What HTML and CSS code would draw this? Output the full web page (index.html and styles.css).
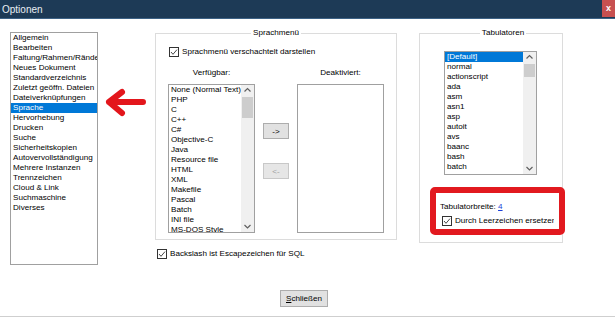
FILE: index.html
```html
<!DOCTYPE html>
<html lang="de">
<head>
  <meta charset="UTF-8" />
  <title>Optionen</title>
  <link rel="stylesheet" href="styles.css">
</head>
<body>
  <div class="titlebar">
    <span class="title">Optionen</span>
    <span class="close">x</span>
  </div>

  <div class="content">
    <ul class="list nav">
      <li>Allgemein</li>
      <li>Bearbeiten</li>
      <li>Faltung/Rahmen/Ränder</li>
      <li>Neues Dokument</li>
      <li>Standardverzeichnis</li>
      <li>Zuletzt geöffn. Dateien</li>
      <li>Dateiverknüpfungen</li>
      <li class="selected">Sprache</li>
      <li>Hervorhebung</li>
      <li>Drucken</li>
      <li>Suche</li>
      <li>Sicherheitskopien</li>
      <li>Autovervollständigung</li>
      <li>Mehrere Instanzen</li>
      <li>Trennzeichen</li>
      <li>Cloud &amp; Link</li>
      <li>Suchmaschine</li>
      <li>Diverses</li>
    </ul>

    <div class="arrow-col">
      <svg class="arrow" width="44" height="30" viewBox="0 0 44 30">
        <path d="M17 4 L4 14 L17 25 M4 14 L38 14" fill="none" stroke="#e3161c" stroke-width="6" stroke-linecap="round" stroke-linejoin="round"/>
      </svg>
    </div>

    <div class="middle">
      <fieldset class="group lang">
        <legend>Sprachmenü</legend>
        <label class="check nested">
          <svg class="cb" width="10" height="10" viewBox="0 0 10 10"><rect x="0.5" y="0.5" width="9" height="9" fill="#fff" stroke="#333"/><polyline points="2,5 4,7.3 8,2.6" fill="none" stroke="#333" stroke-width="0.9"/></svg>
          Sprachmenü verschachtelt darstellen
        </label>
        <div class="pickers">
          <div class="pick-col">
            <div class="pick-label">Verfügbar:</div>
            <div class="list scroll lang-list">
              <ul class="items">
                <li>None (Normal Text)</li>
                <li>PHP</li>
                <li>C</li>
                <li>C++</li>
                <li>C#</li>
                <li>Objective-C</li>
                <li>Java</li>
                <li>Resource file</li>
                <li>HTML</li>
                <li>XML</li>
                <li>Makefile</li>
                <li>Pascal</li>
                <li>Batch</li>
                <li>INI file</li>
                <li>MS-DOS Style</li>
              </ul>
              <div class="scrollbar">
                <svg class="chev" width="13" height="11" viewBox="0 0 13 11"><polyline points="3.5,6.5 6.5,3.5 9.5,6.5" fill="none" stroke="#606060" stroke-width="1.2"/></svg>
                <div class="track"><div class="thumb"></div></div>
                <svg class="chev" width="13" height="11" viewBox="0 0 13 11"><polyline points="3.5,4 6.5,7 9.5,4" fill="none" stroke="#606060" stroke-width="1.2"/></svg>
              </div>
            </div>
          </div>
          <div class="move-col">
            <button class="btn small">-&gt;</button>
            <button class="btn small" disabled>&lt;-</button>
          </div>
          <div class="pick-col">
            <div class="pick-label">Deaktiviert:</div>
            <div class="list lang-list"></div>
          </div>
        </div>
      </fieldset>
      <label class="check sql">
        <svg class="cb" width="10" height="10" viewBox="0 0 10 10"><rect x="0.5" y="0.5" width="9" height="9" fill="#fff" stroke="#333"/><polyline points="2,5 4,7.3 8,2.6" fill="none" stroke="#333" stroke-width="0.9"/></svg>
        Backslash ist Escapezeichen für SQL
      </label>
    </div>

    <fieldset class="group tabs">
      <legend>Tabulatoren</legend>
      <div class="list scroll tab-list">
        <ul class="items">
          <li class="selected">[Default]</li>
          <li>normal</li>
          <li>actionscript</li>
          <li>ada</li>
          <li>asm</li>
          <li>asn1</li>
          <li>asp</li>
          <li>autoit</li>
          <li>avs</li>
          <li>baanc</li>
          <li>bash</li>
          <li>batch</li>
          <li>blitzbasic</li>
        </ul>
        <div class="scrollbar">
          <svg class="chev" width="13" height="11" viewBox="0 0 13 11"><polyline points="3.5,6.5 6.5,3.5 9.5,6.5" fill="none" stroke="#606060" stroke-width="1.2"/></svg>
          <div class="track"><div class="thumb"></div></div>
          <svg class="chev" width="13" height="11" viewBox="0 0 13 11"><polyline points="3.5,4 6.5,7 9.5,4" fill="none" stroke="#606060" stroke-width="1.2"/></svg>
        </div>
      </div>
      <div class="highlight">
        <div class="tabwidth">Tabulatorbreite: <a href="#">4</a></div>
        <label class="check spaces">
          <svg class="cb" width="10" height="10" viewBox="0 0 10 10"><rect x="0.5" y="0.5" width="9" height="9" fill="#fff" stroke="#333"/><polyline points="2,5 4,7.3 8,2.6" fill="none" stroke="#333" stroke-width="0.9"/></svg>
          <span class="clip">Durch Leerzeichen ersetzen</span>
        </label>
      </div>
    </fieldset>
  </div>

  <div class="footer">
    <button class="btn close-btn"><u>S</u>chließen</button>
  </div>
</body>
</html>
```

FILE: styles.css
```css
* {
  box-sizing: border-box;
}
body {
  margin: 0;
  width: 615px;
  height: 317px;
  overflow: hidden;
  background: #fff;
  font-family: "Liberation Sans", Arial, sans-serif;
  font-size: 8.1px;
  color: #000;
}
ul {
  list-style: none;
  margin: 0;
  padding: 0;
}
li {
  height: 10px;
  line-height: 10px;
  white-space: nowrap;
  padding-left: 2px;
}
li.selected {
  background: #0078d7;
  color: #fff;
}

/* title bar */
.titlebar {
  height: 19px;
  background: #1d3a56;
  border-bottom: 1px solid #3d6286;
  display: flex;
  align-items: center;
  justify-content: space-between;
}
.title {
  color: #e8eef4;
  font-size: 10px;
  padding-left: 2px;
}
.close {
  align-self: flex-start;
  width: 13px;
  height: 17px;
  background: #c75050;
  color: #fff;
  font-size: 9px;
  font-weight: bold;
  text-align: center;
  line-height: 16px;
}

/* main area */
.content {
  height: 271px;
  display: flex;
  align-items: flex-start;
  padding: 9px 0 0 10px;
}
.list {
  border: 1px solid #a0a0a0;
  background: #fff;
  overflow: hidden;
}
.nav {
  width: 88px;
  height: 233px;
  margin-top: 4px;
}
.arrow-col {
  width: 57px;
  padding: 60px 0 0 7px;
}
.arrow {
  display: block;
}

.group {
  margin: 0;
  padding: 0;
  border: 1px solid #dcdcdc;
  min-width: 0;
}
.group legend {
  margin: 0 auto;
  padding: 0 2px;
  line-height: 10px;
  height: 10px;
}

/* Sprachmenü */
.lang {
  width: 242px;
  padding: 0 12px 6px 12px;
}
.check {
  display: flex;
  align-items: center;
  gap: 3px;
  height: 10px;
  line-height: 10px;
}
.cb {
  display: block;
  flex: none;
}
.nested {
  margin: 9px 0 0 1px;
}
.pickers {
  display: flex;
  gap: 8px;
  margin-top: 11px;
}
.pick-col {
  width: 87px;
  display: flex;
  flex-direction: column;
  align-items: center;
}
.pick-label {
  height: 10px;
  line-height: 10px;
  margin-bottom: 6px;
}
.lang-list {
  width: 87px;
  height: 149px;
}
.move-col {
  display: flex;
  flex-direction: column;
  gap: 24px;
  padding-top: 55px;
}
.btn {
  font-family: inherit;
  font-size: 8.1px;
  color: #000;
  background: #e1e1e1;
  border: 1px solid #adadad;
  padding: 0;
}
.btn.small {
  width: 26px;
  height: 16px;
}
.btn:disabled {
  color: #a0a0a0;
  background: #e6e6e6;
  border-color: #c8c8c8;
}
.sql {
  margin: 9px 0 0 2px;
}

/* scrolling lists */
.scroll {
  display: flex;
}
.scroll .items {
  flex: 1;
  min-width: 0;
  overflow: hidden;
}
.scrollbar {
  width: 13px;
  flex: none;
  background: #f0f0f0;
  display: flex;
  flex-direction: column;
}
.chev {
  display: block;
  flex: none;
}
.track {
  flex: 1;
  padding: 1px 1px 0 1px;
}
.thumb {
  height: 21px;
  background: #cdcdcd;
}

/* Tabulatoren */
.tabs {
  width: 144px;
  height: 215px;
  margin-left: 22px;
  padding: 0 0 0 24px;
}
.tab-list {
  width: 93px;
  height: 124px;
  margin-top: 13px;
}
.tab-list .thumb {
  height: 13px;
}
.highlight {
  width: 135px;
  height: 48px;
  margin: 12px 0 0 -14px;
  border: 6px solid #e2191f;
  border-radius: 5px;
  background: #fff;
  padding: 9px 0 0 4px;
}
.tabwidth {
  height: 10px;
  line-height: 10px;
}
.tabwidth a {
  color: #1a3fd8;
}
.spaces {
  margin: 4px 0 0 2px;
}
.clip {
  display: block;
  width: 99px;
  overflow: hidden;
  white-space: nowrap;
}

/* footer */
.footer {
  height: 27px;
  padding-left: 280px;
  border-bottom: 1px solid #cfcfcf;
}
.close-btn {
  width: 48px;
  height: 17px;
}
```
